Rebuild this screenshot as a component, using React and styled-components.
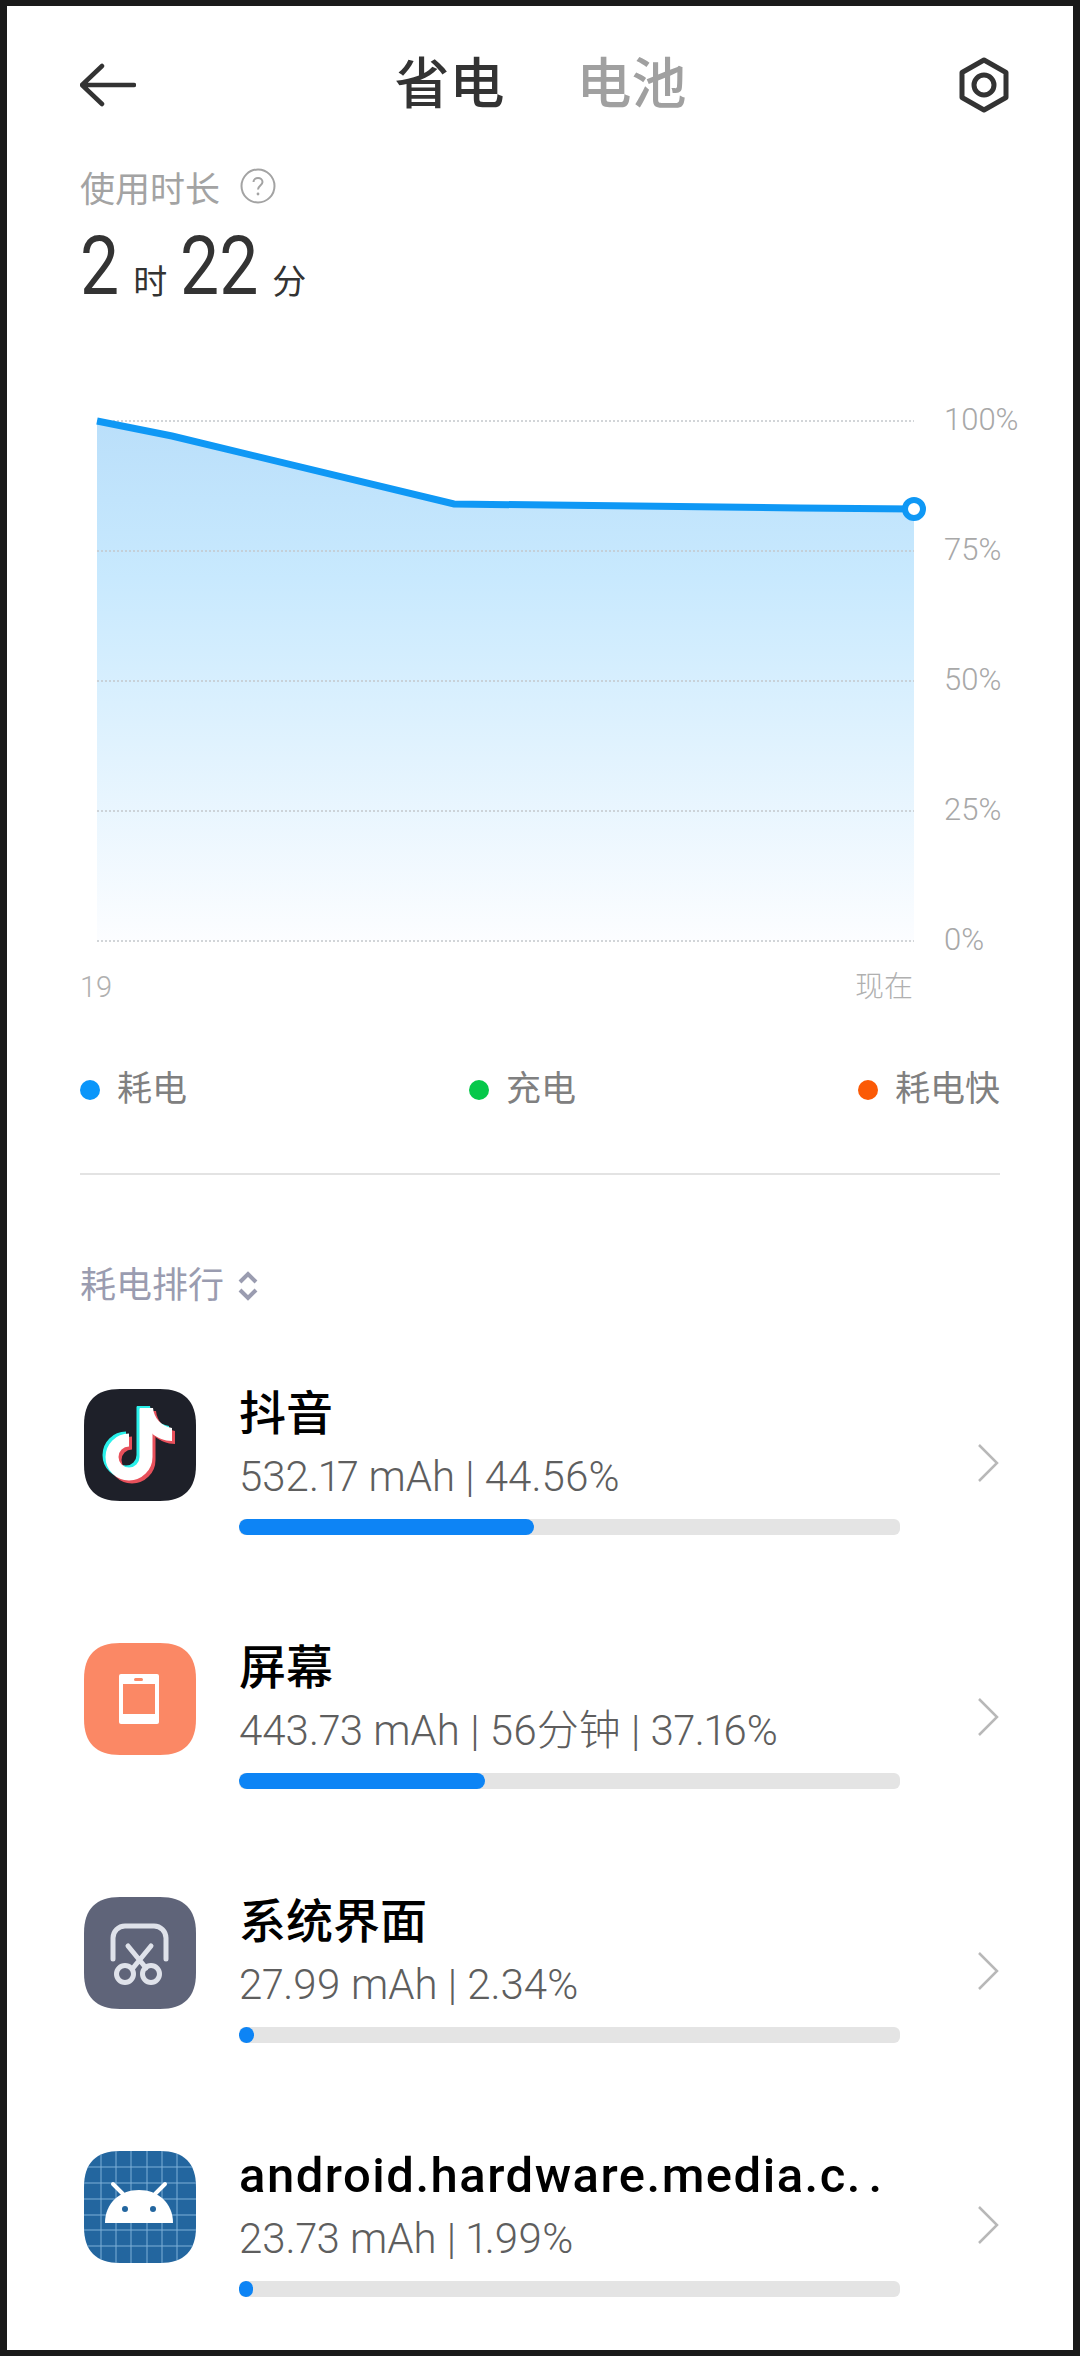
import React from "react";
import styled, { createGlobalStyle } from "styled-components";

const Global = createGlobalStyle`
  html, body { margin: 0; padding: 0; background: #1a1a1a; }
  body { font-family: Roboto, "Noto Sans CJK SC", sans-serif; }
  #root { width: 1080px; height: 2356px; }
`;

const Frame = styled.div`
  box-sizing: border-box;
  width: 1080px;
  height: 2356px;
  border-style: solid;
  border-color: #1a1a1a;
  border-width: 6px 7px;
  background: #fff;
  overflow: hidden;
`;

const Header = styled.header`
  display: grid;
  grid-template-columns: 1fr auto 1fr;
  align-items: center;
  height: 158px;
  padding: 0 63px 0 73px;
`;

const HeaderIcon = styled.svg`
  display: block;
  justify-self: ${(p) => (p.$end ? "end" : "start")};
`;

const Tabs = styled.div`
  display: flex;
  gap: 72px;
  margin: -3px 0 0 -9px;
`;

const Tab = styled.span`
  font-size: 55px;
  line-height: 60px;
  font-weight: 500;
  color: ${(p) => (p.$active ? "#333" : "#a0a0a0")};
`;

const Summary = styled.section`
  margin-top: -1px;
  padding: 0 0 0 73px;
`;

const SummaryLabel = styled.div`
  display: flex;
  align-items: center;
  gap: 20px;
  height: 46px;
  font-size: 35px;
  color: #a3a3a3;
`;

const Duration = styled.div`
  display: flex;
  align-items: baseline;
  margin-top: 13px;
  height: 90px;
  color: #333;
`;

const Big = styled.span`
  display: inline-block;
  font-size: 81px;
  line-height: 90px;
  transform: scaleX(0.86);
  transform-origin: left center;
  margin-right: ${(p) => 14 - 6.4 * p.$chars}px;
`;

const Unit = styled.span`
  font-size: 34px;
  margin-right: 13px;
`;

const ChartRow = styled.div`
  display: flex;
  margin: 96px 0 0 83px;
`;

const ChartSvg = styled.svg`
  display: block;
  overflow: visible;
`;

const YAxis = styled.div`
  display: flex;
  flex-direction: column;
  justify-content: space-between;
  height: 542px;
  margin: 1px 0 0 18px;
  font-size: 31px;
  line-height: 22px;
  font-weight: 300;
  color: #a8a8a8;
`;

const XAxis = styled.div`
  display: flex;
  justify-content: space-between;
  width: 833px;
  margin: 18px 0 0 73px;
  font-size: 29px;
  line-height: 34px;
  font-weight: 300;
  color: #b0b0b0;
`;

const Legend = styled.div`
  display: flex;
  justify-content: space-between;
  margin: 61px 73px 0;
`;

const LegendItem = styled.div`
  display: flex;
  align-items: center;
  gap: 17px;
  font-size: 35px;
  line-height: 50px;
  color: #808080;
`;

const Dot = styled.span`
  width: 20px;
  height: 20px;
  border-radius: 50%;
  background: ${(p) => p.$color};
`;

const Divider = styled.div`
  height: 2px;
  margin: 58px 73px 0;
  background: #e3e3e3;
`;

const RankHead = styled.div`
  display: flex;
  align-items: center;
  gap: 13px;
  margin: 86px 0 0 73px;
  font-size: 36px;
  line-height: 50px;
  color: #9a9cb0;
`;

const List = styled.div`
  margin-top: 78px;
  padding: 0 74px 0 77px;
  display: flex;
  flex-direction: column;
  gap: 112px;
`;

const Row = styled.div`
  display: grid;
  grid-template-columns: 112px 661px 1fr;
  column-gap: 43px;
  height: 142px;
`;

const AppIcon = styled.svg`
  display: block;
`;

const Info = styled.div`
  display: flex;
  flex-direction: column;
  min-width: 0;
`;

const Name = styled.div`
  margin-top: -3px;
  font-size: ${(p) => (p.$latin ? "49px" : "47px")};
  line-height: 56px;
  font-weight: 500;
  letter-spacing: ${(p) => (p.$latin ? "1.5px" : "0")};
  color: #000;
  white-space: nowrap;
`;

const Dots = styled.span`
  letter-spacing: 8px;
`;

const Meta = styled.div`
  margin-top: 10px;
  font-size: 42px;
  line-height: 50px;
  font-weight: 300;
  font-variant-numeric: proportional-nums;
  color: #5e5e5e;
  white-space: nowrap;
`;

const Track = styled.div`
  height: 16px;
  margin-top: 17px;
  border-radius: 6px;
  background: #e4e4e4;
  overflow: hidden;
`;

const Fill = styled.div`
  height: 100%;
  min-width: 14px;
  border-radius: 8px;
  background: #0d84f5;
`;

const Chevron = styled.svg`
  display: block;
  align-self: start;
  margin: 55px 0 0 auto;
`;

const squircle =
  "M36 0H76C100 0 112 12 112 36V76C112 100 100 112 76 112H36C12 112 0 100 0 76V36C0 12 12 0 36 0Z";

const Note = ({ color, dx = 0, dy = 0 }) => (
  <g transform={`translate(${dx} ${dy})`}>
    <path d="M62 20V68A17 17 0 1 1 45 51" fill="none" stroke={color} strokeWidth="13" />
    <path d="M55.5 19H69C70 29 77 37 88 39V52C80 52 74 49 68.5 45Z" fill={color} />
  </g>
);

const TiktokIcon = () => (
  <AppIcon width="112" height="112" viewBox="0 0 112 112">
    <path d={squircle} fill="#1e2029" />
    <Note color="#2af0ea" dx="-3" dy="-2" />
    <Note color="#e8505b" dx="3" dy="3" />
    <Note color="#fff" />
  </AppIcon>
);

const ScreenIcon = () => (
  <AppIcon width="112" height="112" viewBox="0 0 112 112">
    <path d={squircle} fill="#fb8865" />
    <rect x="35" y="31" width="40" height="50" rx="2" fill="#fff" />
    <rect x="39" y="41" width="32" height="30" fill="#fb8865" />
    <rect x="50" y="35" width="9" height="3" rx="1.5" fill="#fb8865" />
  </AppIcon>
);

const ScissorsIcon = () => (
  <AppIcon width="112" height="112" viewBox="0 0 112 112">
    <path d={squircle} fill="#5f6479" />
    <g fill="none" stroke="#dfe2ea" strokeWidth="5" strokeLinecap="round">
      <path d="M29 62V41A12 12 0 0 1 41 29H70A12 12 0 0 1 82 41V62" />
      <path d="M44 49L62 71M67 49L49 71" />
      <circle cx="41" cy="77" r="8.5" />
      <circle cx="67" cy="77" r="8.5" />
    </g>
  </AppIcon>
);

const AndroidIcon = () => (
  <AppIcon width="112" height="112" viewBox="0 0 112 112">
    <defs>
      <clipPath id="androidClip">
        <path d={squircle} />
      </clipPath>
    </defs>
    <g clipPath="url(#androidClip)">
      <rect width="112" height="112" fill="#23669f" />
      <g stroke="#7fb0d8" strokeWidth="1">
        {[17, 32, 47, 63, 78, 93].map((v) => (
          <path key={"v" + v} d={`M${v} 0V112`} />
        ))}
        {[16, 32, 48, 64, 79, 95].map((v) => (
          <path key={"h" + v} d={`M0 ${v}H112`} />
        ))}
      </g>
    </g>
    <path d="M21 72C21 52 36 39 55 39C74 39 89 52 89 72Z" fill="#fff" />
    <path d="M29 33L39 43M81 33L71 43" stroke="#fff" strokeWidth="4" strokeLinecap="round" />
    <circle cx="41" cy="58" r="3" fill="#23669f" />
    <circle cx="69" cy="58" r="3" fill="#23669f" />
  </AppIcon>
);

const apps = [
  { icon: <TiktokIcon />, name: "抖音", meta: "532.17 mAh | 44.56%", pct: 44.56 },
  { icon: <ScreenIcon />, name: "屏幕", meta: "443.73 mAh | 56分钟 | 37.16%", pct: 37.16 },
  { icon: <ScissorsIcon />, name: "系统界面", meta: "27.99 mAh | 2.34%", pct: 2.34 },
  {
    icon: <AndroidIcon />,
    latin: true,
    name: (
      <>
        android.hardware.media.c<Dots>..</Dots>
      </>
    ),
    meta: "23.73 mAh | 1.99%",
    pct: 1.99,
  },
];

const gridY = [421, 551, 681, 811, 941];

const Chart = () => (
  <ChartSvg width="836" height="544" viewBox="90 408 836 544">
    <defs>
      <linearGradient id="area" x1="0" y1="421" x2="0" y2="941" gradientUnits="userSpaceOnUse">
        <stop offset="0" stopColor="#badffa" />
        <stop offset="0.3" stopColor="#c8e9fe" />
        <stop offset="0.65" stopColor="#e2f3fe" />
        <stop offset="1" stopColor="#fcfdff" />
      </linearGradient>
    </defs>
    <path d="M97 421L172 435L454 504L800 507L914 509V941H97Z" fill="url(#area)" />
    {gridY.map((y) => (
      <path key={y} d={`M97 ${y}H914`} stroke="#c4c8cc" strokeWidth="1.5" strokeDasharray="2 2" />
    ))}
    <path d="M97 421L172 436L454 504L800 508L914 509" fill="none" stroke="#0f98f5" strokeWidth="7" />
    <circle cx="914" cy="509" r="9" fill="#fff" stroke="#0f98f5" strokeWidth="6" />
  </ChartSvg>
);

export default function App() {
  return (
    <>
      <Global />
      <Frame>
        <Header>
          <HeaderIcon width="56" height="44" viewBox="0 0 56 44">
            <path
              d="M54 22H3M22 3L2 22L22 41"
              fill="none"
              stroke="#333"
              strokeWidth="4.5"
              strokeLinecap="round"
              strokeLinejoin="round"
            />
          </HeaderIcon>
          <Tabs>
            <Tab $active>省电</Tab>
            <Tab>电池</Tab>
          </Tabs>
          <HeaderIcon $end width="52" height="56" viewBox="0 0 52 56">
            <path
              d="M26 3L48 15.5V40.5L26 53L4 40.5V15.5Z"
              fill="none"
              stroke="#333"
              strokeWidth="5"
              strokeLinejoin="round"
            />
            <circle cx="26" cy="28" r="10" fill="none" stroke="#333" strokeWidth="5" />
          </HeaderIcon>
        </Header>

        <Summary>
          <SummaryLabel>
            使用时长
            <svg width="36" height="36" viewBox="0 0 36 36">
              <circle cx="18" cy="18" r="16.5" fill="none" stroke="#a3a3a3" strokeWidth="2" />
              <path
                d="M13.5 14C13.5 8.5 22.5 8.5 22.5 14C22.5 17.5 18 17.5 18 21.5"
                fill="none"
                stroke="#a3a3a3"
                strokeWidth="2"
              />
              <circle cx="18" cy="26" r="1.4" fill="#a3a3a3" />
            </svg>
          </SummaryLabel>
          <Duration>
            <Big $chars={1}>2</Big>
            <Unit>时</Unit>
            <Big $chars={2}>22</Big>
            <Unit>分</Unit>
          </Duration>
        </Summary>

        <ChartRow>
          <Chart />
          <YAxis>
            <span>100%</span>
            <span>75%</span>
            <span>50%</span>
            <span>25%</span>
            <span>0%</span>
          </YAxis>
        </ChartRow>
        <XAxis>
          <span>19</span>
          <span>现在</span>
        </XAxis>

        <Legend>
          <LegendItem>
            <Dot $color="#0a96fa" />
            耗电
          </LegendItem>
          <LegendItem>
            <Dot $color="#06c84a" />
            充电
          </LegendItem>
          <LegendItem>
            <Dot $color="#fb5a06" />
            耗电快
          </LegendItem>
        </Legend>
        <Divider />

        <RankHead>
          耗电排行
          <svg width="22" height="30" viewBox="0 0 22 30">
            <path
              d="M3 11L11 3L19 11M3 19L11 27L19 19"
              fill="none"
              stroke="#9a9cb0"
              strokeWidth="4"
            />
          </svg>
        </RankHead>

        <List>
          {apps.map((app, i) => (
            <Row key={i}>
              {app.icon}
              <Info>
                <Name $latin={app.latin}>{app.name}</Name>
                <Meta>{app.meta}</Meta>
                <Track>
                  <Fill style={{ width: `${app.pct}%` }} />
                </Track>
              </Info>
              <Chevron width="22" height="38" viewBox="0 0 22 38">
                <path d="M2 1L20 19L2 37" fill="none" stroke="#b8b8b8" strokeWidth="2.5" />
              </Chevron>
            </Row>
          ))}
        </List>
      </Frame>
    </>
  );
}
